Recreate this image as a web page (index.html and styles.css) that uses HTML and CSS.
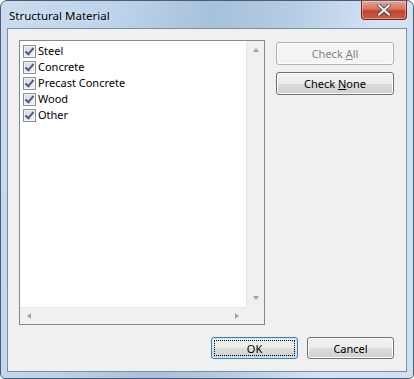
FILE: index.html
```html
<!DOCTYPE html>
<html lang="en">
<head>
<meta charset="utf-8">
<title>Structural Material</title>
<link rel="stylesheet" href="styles.css">
</head>
<body>
<div class="window">
	<div class="titlebar">
		<span class="title">Structural Material</span>
		<div class="close">
			<svg width="14" height="12" viewBox="0 0 14 12"><path d="M2 1.5 L12 10.5 M12 1.5 L2 10.5" stroke="#3a3a3a" stroke-width="3.6" stroke-linecap="square"/><path d="M2 1.5 L12 10.5 M12 1.5 L2 10.5" stroke="#fff" stroke-width="2" stroke-linecap="square"/></svg>
		</div>
	</div>
	<div class="client">
		<div class="top">
			<div class="listbox">
				<div class="list-main">
					<ul class="items">
						<li><span class="chk"></span>Steel</li>
						<li><span class="chk"></span>Concrete</li>
						<li><span class="chk"></span>Precast Concrete</li>
						<li><span class="chk"></span>Wood</li>
						<li><span class="chk"></span>Other</li>
					</ul>
					<div class="vscroll">
						<span class="arr up"></span>
						<span class="arr down"></span>
					</div>
				</div>
				<div class="hrow">
					<div class="hscroll">
						<span class="arr left"></span>
						<span class="arr right"></span>
					</div>
					<div class="corner"></div>
				</div>
			</div>
			<div class="side">
				<button class="btn disabled">Check <u>A</u>ll</button>
				<button class="btn">Check <u>N</u>one</button>
			</div>
		</div>
		<div class="bottom">
			<button class="btn default"><span class="focus">OK</span></button>
			<button class="btn">Cancel</button>
		</div>
	</div>
</div>
</body>
</html>
```
FILE: styles.css
```css
body {
	margin: 0;
	background: #fff;
	font-family: "Noto Sans", "Liberation Sans", sans-serif;
	font-size: 11px;
	color: #000;
}

.window {
	box-sizing: border-box;
	width: 414px;
	height: 379px;
	border: 1px solid #4f5c6b;
	border-radius: 7px 7px 5px 5px;
	background: linear-gradient(100deg, #c9dcef 0%, #bcd3ea 25%, #a6c1dc 45%, #b3cbe4 60%, #d3e3f3 80%, #cfe0f1 100%);
	display: flex;
	flex-direction: column;
}

.titlebar {
	height: 27px;
	display: flex;
	align-items: flex-start;
	justify-content: space-between;
	padding-left: 8px;
	padding-right: 6px;
}

.title {
	margin-top: 7px;
	font-size: 11.5px;
	color: #000;
	text-shadow: 0 0 6px rgba(255,255,255,0.9);
}

.close {
	width: 44px;
	height: 18px;
	border: 1px solid #6b2a22;
	border-top: none;
	border-radius: 0 0 4px 4px;
	background: linear-gradient(#e8a595 0%, #d9735f 45%, #c3432c 55%, #cf5a3c 100%);
	box-shadow: inset 0 0 0 1px rgba(255,255,255,0.35);
	display: flex;
	align-items: center;
	justify-content: center;
}

.client {
	flex: 1;
	margin: 0 6px 6px 6px;
	border: 1px solid #7b8ea3;
	background: #f0f0f0;
	padding: 11px 12px 12px 11px;
	display: flex;
	flex-direction: column;
}

.top {
	display: flex;
	gap: 11px;
}

.listbox {
	box-sizing: border-box;
	width: 246px;
	height: 285px;
	border: 1px solid #828790;
	background: #fff;
	display: flex;
	flex-direction: column;
}

.list-main {
	flex: 1;
	display: flex;
}

.items {
	flex: 1;
	list-style: none;
	margin: 0;
	padding: 2px 0 0 3px;
}

.items li {
	height: 16px;
	line-height: 16px;
	display: flex;
	align-items: center;
	gap: 2px;
	white-space: nowrap;
}

.chk {
	box-sizing: border-box;
	width: 13px;
	height: 13px;
	border: 1px solid #8f8f8f;
	background: linear-gradient(135deg, #d6d6d6, #f5f5f5) ;
	box-shadow: inset 0 0 0 1px #f4f4f4;
	position: relative;
	flex: none;
}

.chk::after {
	content: "";
	position: absolute;
	left: 3px;
	top: 0px;
	width: 3px;
	height: 7px;
	border: solid #4a5f97;
	border-width: 0 2px 2px 0;
	transform: rotate(40deg);
}

.vscroll {
	width: 17px;
	background: #f0f0f0;
	border-left: 1px solid #e6e6e6;
	display: flex;
	flex-direction: column;
	justify-content: space-between;
	align-items: center;
	padding: 7px 0;
}

.hrow {
	height: 17px;
	display: flex;
}

.hscroll {
	flex: 1;
	background: #f0f0f0;
	border-top: 1px solid #e6e6e6;
	display: flex;
	justify-content: space-between;
	align-items: center;
	padding: 0 7px;
}

.corner {
	width: 18px;
	background: #f0f0f0;
}

.arr {
	width: 0;
	height: 0;
	border: 3.5px solid transparent;
}

.arr.up { border-bottom: 4px solid #a3a3a3; border-top-width: 0; }
.arr.down { border-top: 4px solid #a3a3a3; border-bottom-width: 0; }
.arr.left { border-right: 4px solid #a3a3a3; border-left-width: 0; }
.arr.right { border-left: 4px solid #a3a3a3; border-right-width: 0; }

.side {
	display: flex;
	flex-direction: column;
	gap: 7px;
	padding-top: 2px;
}

.btn {
	box-sizing: border-box;
	width: 118px;
	height: 23px;
	border: 1px solid #707070;
	border-radius: 3px;
	background: linear-gradient(#f2f2f2 0%, #ebebeb 50%, #dddddd 50%, #cfcfcf 100%);
	box-shadow: inset 0 0 0 1px #fcfcfc;
	font-family: inherit;
	font-size: 11px;
	color: #000;
	padding: 0;
}

.btn.disabled {
	border-color: #adb2b5;
	background: #f4f4f4;
	color: #838383;
}

.bottom {
	margin-top: auto;
	display: flex;
	justify-content: flex-end;
	gap: 9px;
}

.bottom .btn {
	width: 87px;
	height: 22px;
}

.btn.default {
	border-color: #3c7fb1;
	box-shadow: inset 0 0 0 1px #c5ecfc;
	padding: 2px;
}

.focus {
	display: flex;
	align-items: center;
	justify-content: center;
	height: 100%;
	outline: 1px dotted #000;
	outline-offset: -1px;
}
```
